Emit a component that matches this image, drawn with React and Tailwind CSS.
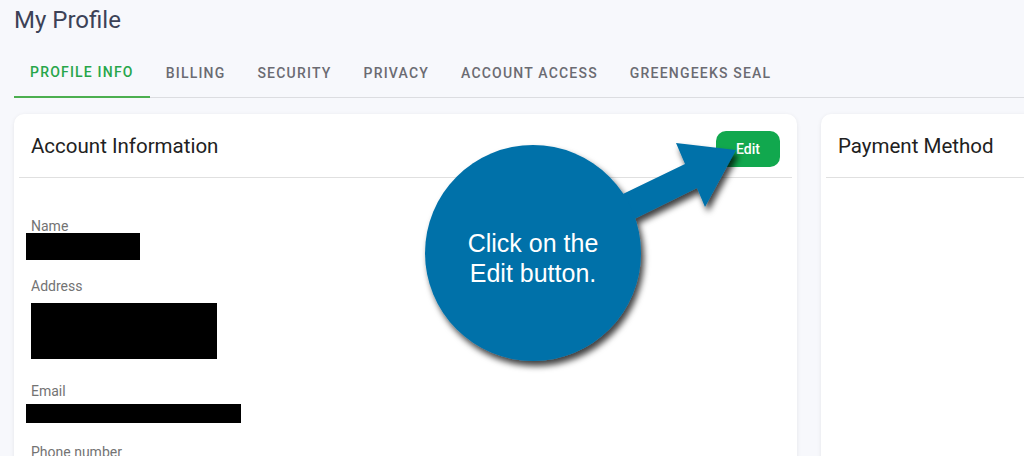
import React from 'react';

const tabs = ['Profile Info', 'Billing', 'Security', 'Privacy', 'Account Access', 'GreenGeeks Seal'];

function Field({ label, children, className }) {
  return (
    <div className={className}>
      <div className="text-[14px] leading-[13px] text-[#737373]">{label}</div>
      {children}
    </div>
  );
}

function Callout() {
  return (
    <div className="absolute left-0 top-0 w-[1024px] h-[456px] pointer-events-none">
      <svg width="1024" height="456" className="absolute left-0 top-0">
        <defs>
          <filter id="shadow" x="-20%" y="-20%" width="140%" height="140%">
            <feDropShadow dx="3" dy="5" stdDeviation="3" floodColor="#000" floodOpacity="0.75" />
          </filter>
        </defs>
        <g filter="url(#shadow)" fill="#0071a9">
          <polygon points="598,206 685,164 676,143 736,150 705,207 697,188 612,230" />
          <circle cx="533" cy="253" r="108" />
        </g>
      </svg>
      <div
        className="absolute left-[433px] top-[228px] w-[200px] text-center text-white text-[25px] leading-[30px]"
        style={{ fontFamily: '"Liberation Sans", Arial, sans-serif' }}
      >
        Click on the
        <br />
        Edit button.
      </div>
    </div>
  );
}

export default function App() {
  return (
    <div
      className="relative w-[1024px] h-[456px] overflow-hidden bg-[#f7f8fc]"
      style={{ fontFamily: 'Roboto, "Noto Sans", sans-serif' }}
    >
      <div className="pl-[14px]">
        <h1 className="pt-[4px] text-[24px] leading-8 text-[#3c4257]">My Profile</h1>

        <div className="mt-[13px] flex h-[49px] border-b border-[#dcdde1]">
          {tabs.map((t, i) => (
            <div
              key={t}
              className={
                i === 0
                  ? 'px-4 flex items-center uppercase text-[14px] font-medium tracking-[1.2px] text-[#27a64a] border-b-2 border-[#4caf50] -mb-px'
                  : 'px-4 flex items-center uppercase text-[14px] font-medium tracking-[1.2px] text-[#6b6b72]'
              }
            >
              {t}
            </div>
          ))}
        </div>

        <div className="mt-4 flex gap-6">
          <div className="w-[783px] shrink-0 h-[400px] bg-white rounded-[10px] shadow-[0_1px_4px_rgba(0,0,0,0.08)]">
            <div className="flex items-start justify-between h-[63px] px-[17px]">
              <div className="pt-[20px] text-[20.5px] leading-6 text-[#212121]">Account Information</div>
              <button className="mt-[17px] w-16 h-9 rounded-[10px] bg-[#11a84e] text-white text-[14px] font-medium">
                Edit
              </button>
            </div>
            <div className="mx-[5px] h-px bg-[#e0e0e0]" />
            <div className="pt-[42px] pl-[17px]">
              <Field label="Name">
                <div className="-ml-[5px] w-[114px] h-[27px] bg-black" />
              </Field>
              <Field label="Address" className="mt-[20px]">
                <div className="mt-[10px] w-[186px] h-[56px] bg-black" />
              </Field>
              <Field label="Email" className="mt-[26px]">
                <div className="mt-[6px] -ml-[5px] w-[215px] h-[19px] bg-black" />
              </Field>
              <Field label="Phone number" className="mt-[23px]" />
            </div>
          </div>

          <div className="w-[783px] shrink-0 h-[400px] bg-white rounded-[10px] shadow-[0_1px_4px_rgba(0,0,0,0.08)]">
            <div className="flex items-start h-[63px] px-[17px]">
              <div className="pt-[20px] text-[20.5px] leading-6 text-[#212121]">Payment Method</div>
            </div>
            <div className="mx-[5px] h-px bg-[#e0e0e0]" />
          </div>
        </div>
      </div>
      <Callout />
    </div>
  );
}
